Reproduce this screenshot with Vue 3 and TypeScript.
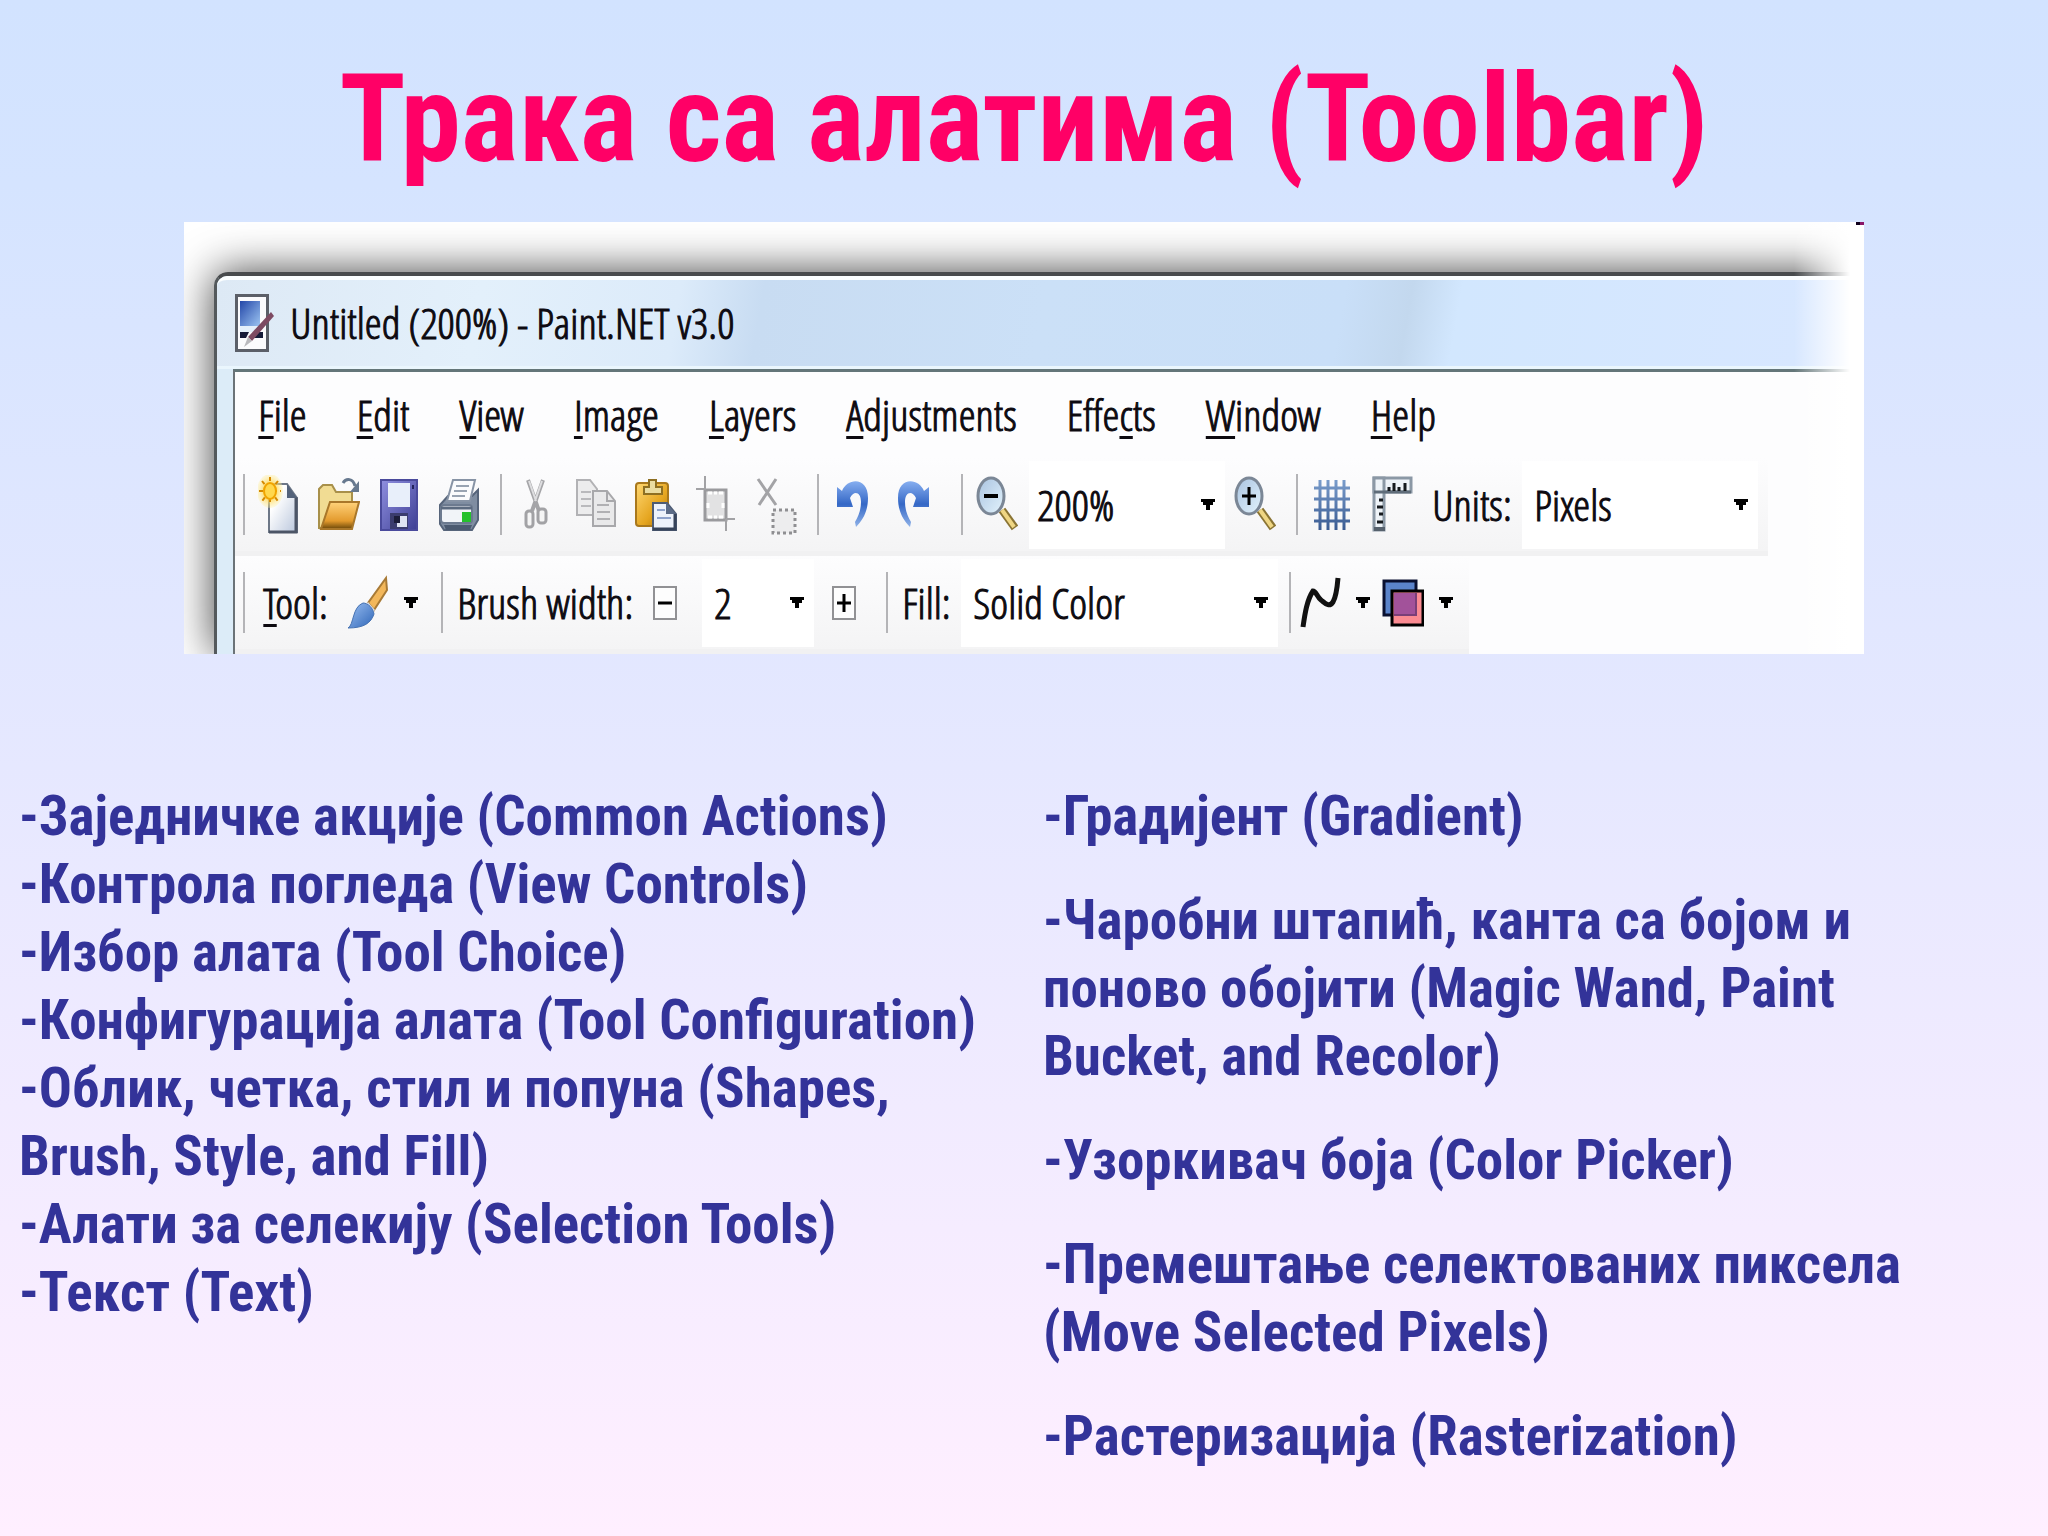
<script setup lang="ts">
import { ref } from 'vue'

interface MenuEntry {
  before: string
  key: string
  after: string
}

const menus: MenuEntry[] = [
  { before: '', key: 'F', after: 'ile' },
  { before: '', key: 'E', after: 'dit' },
  { before: '', key: 'V', after: 'iew' },
  { before: '', key: 'I', after: 'mage' },
  { before: '', key: 'L', after: 'ayers' },
  { before: '', key: 'A', after: 'djustments' },
  { before: 'Effe', key: 'c', after: 'ts' },
  { before: '', key: 'W', after: 'indow' },
  { before: '', key: 'H', after: 'elp' },
]

const commonTopics: string[] = [
  '-Заједничке акције (Common Actions)',
  '-Контрола погледа (View Controls)',
  '-Избор алата (Tool Choice)',
  '-Конфигурација алата (Tool Configuration)',
  '-Облик, четка, стил и попуна (Shapes, Brush, Style, and Fill)',
  '-Алати за селекију (Selection Tools)',
  '-Текст (Text)',
]

const toolTopics: string[] = [
  '-Градијент (Gradient)',
  '-Чаробни штапић, канта са бојом и поново обојити (Magic Wand, Paint Bucket, and Recolor)',
  '-Узоркивач боја (Color Picker)',
  '-Премештање селектованих пиксела (Move Selected Pixels)',
  '-Растеризација (Rasterization)',
]

const zoom = ref('200%')
const units = ref('Pixels')
const brushWidth = ref('2')
const fill = ref('Solid Color')
</script>

<template>
  <main class="slide">
    <h1>Трака са алатима (Toolbar)</h1>

    <section class="shot">
      <div class="window">
        <header class="titlebar">
          <svg class="app-icon" viewBox="0 0 40 58">
            <defs>
              <linearGradient id="screen" x1="0" y1="0" x2="1" y2="1">
                <stop offset="0" stop-color="#2347a8" />
                <stop offset="1" stop-color="#9cc4f2" />
              </linearGradient>
            </defs>
            <rect x="1.500" y="1.500" width="31" height="55" fill="#fbfbfd" stroke="#5b5f68" stroke-width="3" />
            <rect x="5" y="7" width="20" height="25" fill="url(#screen)" />
            <path d="M5 32h18l-5 6H5z" fill="#e4f0fb" />
            <path d="M5 38h9l-3 6H5zM19 38h9v6h-12z" fill="#151a38" />
            <path d="M36 18l3 4-22 25-4-4z" fill="#7d4a62" />
            <path d="M13 43l4 4-8 6z" fill="#b9b9bd" />
          </svg>
          <span>Untitled (200%) - Paint.NET v3.0</span>
        </header>

        <div class="client">
          <nav class="menubar">
            <button v-for="m in menus" :key="m.key + m.after" type="button">{{ m.before }}<u>{{ m.key }}</u>{{ m.after }}</button>
          </nav>

          <div class="toolbar main-tools">
            <div class="group">
              <button type="button" class="tool" aria-label="New">
                <svg viewBox="0 0 42 60">
                  <defs>
                    <linearGradient id="page" x1="0" y1="0" x2="1" y2="1">
                      <stop offset="0.3" stop-color="#ffffff" />
                      <stop offset="1" stop-color="#b9c6dc" />
                    </linearGradient>
                    <radialGradient id="glow">
                      <stop offset="0.3" stop-color="#ffcf3a" />
                      <stop offset="1" stop-color="#fff0a0" stop-opacity="0.3" />
                    </radialGradient>
                  </defs>
                  <path d="M11 9h18l10 14v34H11z" fill="url(#page)" stroke="#6d7787" stroke-width="2" />
                  <path d="M38 22v35H11" fill="none" stroke="#4c5566" stroke-width="3" />
                  <path d="M29 9v14h10z" fill="#53627a" />
                  <ellipse cx="12" cy="16" rx="13" ry="17" fill="url(#glow)" />
                  <path d="M12 2v28M1 16h22M4 6l16 20M20 6L4 26" stroke="#d58a00" stroke-width="2" stroke-dasharray="4 3" />
                  <ellipse cx="12" cy="16" rx="6" ry="8" fill="#ffd84d" stroke="#f0a400" stroke-width="2" />
                </svg>
              </button>
              <button type="button" class="tool" aria-label="Open">
                <svg viewBox="0 0 42 60">
                  <defs>
                    <linearGradient id="flap" x1="0" y1="0" x2="0" y2="1">
                      <stop offset="0" stop-color="#ffd27a" />
                      <stop offset="0.7" stop-color="#e39a2d" />
                      <stop offset="1" stop-color="#6b4708" />
                    </linearGradient>
                  </defs>
                  <path d="M1 14l4-4h9l4 7h16v36H1z" fill="#f1dc93" stroke="#a8904a" stroke-width="2" />
                  <path d="M12 27h29l-7 27H3z" fill="url(#flap)" stroke="#a9772a" stroke-width="2" />
                  <path d="M25 8c3-5 10-5 12 3" fill="none" stroke="#66788e" stroke-width="3" />
                  <path d="M41 6v11h-9z" fill="#66788e" />
                </svg>
              </button>
              <button type="button" class="tool" aria-label="Save">
                <svg viewBox="0 0 42 60">
                  <defs>
                    <linearGradient id="disk" x1="0" y1="0" x2="1" y2="1">
                      <stop offset="0" stop-color="#8f8fe0" />
                      <stop offset="1" stop-color="#3e3f94" />
                    </linearGradient>
                  </defs>
                  <rect x="3" y="5" width="36" height="50" fill="url(#disk)" stroke="#4a4a9c" stroke-width="2" />
                  <rect x="10" y="8" width="22" height="24" fill="#e8effa" />
                  <rect x="12" y="38" width="18" height="16" fill="#3b3c6e" />
                  <rect x="19" y="41" width="10" height="11" fill="#dfe3f2" />
                  <rect x="16" y="41" width="6" height="7" fill="#1c1d3a" />
                  <rect x="34" y="10" width="2" height="4" fill="#22235c" />
                </svg>
              </button>
              <button type="button" class="tool" aria-label="Print">
                <svg viewBox="0 0 42 60">
                  <path d="M2 30l8-9h24l6-6v30l-6 10H6l-4-6z" fill="#7f8da1" stroke="#56647a" stroke-width="2" />
                  <path d="M15 5h22l-5 21H9z" fill="#fafbfd" stroke="#8793a5" stroke-width="2" />
                  <path d="M18 11h13M16 16h13M14 21h13" stroke="#98a3b2" stroke-width="2" />
                  <rect x="3" y="30" width="31" height="18" rx="3" fill="#f1f4f8" stroke="#6c7a8f" stroke-width="2" />
                  <path d="M3 33h31" stroke="#5c6b80" stroke-width="3" />
                  <rect x="24" y="37" width="9" height="10" fill="#25c12c" />
                  <path d="M6 50h28l-2 5H8z" fill="#4b5a70" />
                </svg>
              </button>
            </div>

            <span class="sep"></span>
            <div class="group">
              <button type="button" class="tool" aria-label="Cut">
                <svg viewBox="0 0 42 60">
                  <path d="M13 5l11 31M28 5L17 36" fill="none" stroke="#a5a5a8" stroke-width="4" />
                  <path d="M14 6l7 20M27 6l-7 20" stroke="#dedee0" stroke-width="2" />
                  <rect x="11" y="36" width="7" height="16" rx="3" fill="#f5f5f5" stroke="#a2a2a5" stroke-width="3" />
                  <rect x="23" y="34" width="8" height="14" rx="3" fill="#f5f5f5" stroke="#a2a2a5" stroke-width="3" />
                </svg>
              </button>
              <button type="button" class="tool" aria-label="Copy">
                <svg viewBox="0 0 42 60">
                  <path d="M2 5h13l7 9v26H2z" fill="#ececed" stroke="#b2b2b5" stroke-width="2" />
                  <path d="M6 17h10M6 24h10M6 31h10" stroke="#b9b9bc" stroke-width="2" />
                  <path d="M18 16h14l8 10v25H18z" fill="#e9e9ea" stroke="#a8a8ab" stroke-width="2" />
                  <path d="M32 16v10h8" fill="none" stroke="#a8a8ab" stroke-width="2" />
                  <path d="M22 30h12M22 37h13M22 44h13" stroke="#b0b0b3" stroke-width="2" />
                </svg>
              </button>
              <button type="button" class="tool" aria-label="Paste">
                <svg viewBox="0 0 42 60">
                  <defs>
                    <linearGradient id="board" x1="0" y1="0" x2="1" y2="1">
                      <stop offset="0" stop-color="#ffd873" />
                      <stop offset="0.6" stop-color="#e5a51f" />
                      <stop offset="1" stop-color="#a36d06" />
                    </linearGradient>
                  </defs>
                  <rect x="1" y="8" width="32" height="43" rx="3" fill="url(#board)" stroke="#a9781c" stroke-width="2" />
                  <path d="M9 19v-7h5V5h7v7h6v7z" fill="#eadca0" stroke="#8e6f22" stroke-width="2" />
                  <path d="M18 28h14l9 11v16H18z" fill="#edf2fb" stroke="#4e5c74" stroke-width="2" />
                  <path d="M40 39v15H18" fill="none" stroke="#36435a" stroke-width="3" />
                  <path d="M31 28v11h10z" fill="#5b6b87" />
                  <path d="M22 35h8M22 43h14" stroke="#8fa3cc" stroke-width="2" />
                </svg>
              </button>
              <button type="button" class="tool" aria-label="Crop to selection">
                <svg viewBox="0 0 42 60">
                  <rect x="10" y="15" width="21" height="30" fill="#e2e2e3" stroke="#9a9a9d" stroke-width="3" />
                  <path d="M13 18h4M24 18h4M13 42h4M24 42h4M13 28v5M28 28v5M19 18h3M19 42h3" stroke="#fff" stroke-width="3" />
                  <path d="M1 14h10M10 1v14M31 44v12M31 44h9" stroke="#a2a2a5" stroke-width="2" />
                </svg>
              </button>
              <button type="button" class="tool" aria-label="Deselect">
                <svg viewBox="0 0 42 60">
                  <path d="M3 4l18 26M21 4L4 30" stroke="#a3a3a6" stroke-width="3" />
                  <rect x="18" y="35" width="22" height="23" fill="#ededee" stroke="#8f8f92" stroke-width="3" stroke-dasharray="3 3" />
                </svg>
              </button>
            </div>

            <span class="sep"></span>
            <div class="group history">
              <button type="button" class="tool" aria-label="Undo">
                <svg viewBox="0 0 42 60">
                  <defs>
                    <linearGradient id="arc" x1="0" y1="0" x2="0" y2="1">
                      <stop offset="0" stop-color="#86aef0" />
                      <stop offset="0.5" stop-color="#3568c6" />
                      <stop offset="1" stop-color="#8fb2e8" />
                    </linearGradient>
                  </defs>
                  <path d="M5 12l5 4C15 3 36 1 36 23c0 13-5 22-12 29l-1-5c4-7 6-13 6-20 0-10-7-12-11-4l3 9H5z" fill="url(#arc)" />
                </svg>
              </button>
              <button type="button" class="tool" aria-label="Redo">
                <svg viewBox="0 0 42 60">
                  <path d="M37 12l-5 4C27 3 6 1 6 23c0 13 5 22 12 29l1-5c-4-7-6-13-6-20 0-10 7-12 11-4l-3 9h16z" fill="url(#arc)" />
                </svg>
              </button>
            </div>

            <span class="sep"></span>
            <div class="group">
              <button type="button" class="tool" aria-label="Zoom out">
                <svg viewBox="0 0 42 60">
                  <defs>
                    <linearGradient id="lens" x1="0" y1="0" x2="1" y2="1">
                      <stop offset="0" stop-color="#a9c3e0" />
                      <stop offset="1" stop-color="#e3f3fc" />
                    </linearGradient>
                  </defs>
                  <path d="M26 35l13 18" stroke="#8a7434" stroke-width="8" />
                  <path d="M26 35l12 17" stroke="#efd683" stroke-width="4" />
                  <ellipse cx="15" cy="21" rx="13" ry="18" fill="url(#lens)" stroke="#7b8796" stroke-width="3" />
                  <path d="M8 21h14" stroke="#000" stroke-width="4" />
                </svg>
              </button>
              <label class="combo zoom">
                <select v-model="zoom" aria-label="Zoom">
                  <option>200%</option>
                </select>
                <svg class="caret" viewBox="0 0 14 12"><path d="M0 0h14v3h-2v3h-3v5H5V6H2V3H0z" /></svg>
              </label>
              <button type="button" class="tool" aria-label="Zoom in">
                <svg viewBox="0 0 42 60">
                  <path d="M26 35l13 18" stroke="#8a7434" stroke-width="8" />
                  <path d="M26 35l12 17" stroke="#efd683" stroke-width="4" />
                  <ellipse cx="15" cy="21" rx="13" ry="18" fill="url(#lens)" stroke="#7b8796" stroke-width="3" />
                  <path d="M8 21h14M15 12v18" stroke="#000" stroke-width="3" />
                </svg>
              </button>
            </div>

            <span class="sep"></span>
            <div class="group">
              <button type="button" class="tool" aria-label="Grid">
                <svg viewBox="0 0 42 60">
                  <defs>
                    <linearGradient id="mesh" gradientUnits="userSpaceOnUse" x1="0" y1="0" x2="0" y2="60">
                      <stop offset="0" stop-color="#7fa2d0" />
                      <stop offset="1" stop-color="#33548c" />
                    </linearGradient>
                  </defs>
                  <path d="M9 5v50M17 5v50M25 5v50M33 5v50M3 13h36M3 24h36M3 35h36M3 46h36" fill="none" stroke="url(#mesh)" stroke-width="3" />
                </svg>
              </button>
              <button type="button" class="tool" aria-label="Rulers">
                <svg viewBox="0 0 42 60">
                  <rect x="3" y="3" width="37" height="14" fill="#eef3f8" stroke="#8b98a5" stroke-width="3" />
                  <rect x="3" y="3" width="10" height="52" fill="#eef3f8" stroke="#8b98a5" stroke-width="3" />
                  <path d="M3 17h37" stroke="#5f6c79" stroke-width="3" />
                  <path d="M18 16v-4M23 16V8M28 16v-4M34 16V8M12 25H8M12 32H6M12 39H8M12 47H6" stroke="#15191d" stroke-width="3" />
                  <rect x="3" y="52" width="11" height="4" fill="#56616d" />
                </svg>
              </button>
            </div>
            <label class="caption" for="units">Units:</label>
            <span class="combo units">
              <select id="units" v-model="units">
                <option>Pixels</option>
              </select>
              <svg class="caret" viewBox="0 0 14 12"><path d="M0 0h14v3h-2v3h-3v5H5V6H2V3H0z" /></svg>
            </span>
          </div>

          <div class="toolbar tool-options">
            <span class="caption tool-name"><u>T</u>ool:</span>
            <button type="button" class="drop brush" aria-label="Choose tool">
              <svg class="glyph" viewBox="0 0 42 60">
                <defs>
                  <linearGradient id="bristle" x1="0" y1="0" x2="1" y2="1">
                    <stop offset="0" stop-color="#9cc0f2" />
                    <stop offset="1" stop-color="#2f66b8" />
                  </linearGradient>
                </defs>
                <path d="M39 5l1 12-13 20-6-7z" fill="#f2b75b" stroke="#a87a36" stroke-width="2" />
                <path d="M21 29l7 8-4 5-7-8z" fill="#d8dde6" />
                <path d="M16 30c5 0 10 5 11 11-3 9-10 14-26 14 6-3 4-21 15-25z" fill="url(#bristle)" stroke="#4672b2" stroke-width="1" />
              </svg>
              <svg class="caret" viewBox="0 0 14 12"><path d="M0 0h14v3h-2v3h-3v5H5V6H2V3H0z" /></svg>
            </button>

            <span class="sep"></span>
            <label class="caption brush-label" for="brush-width">Brush width:</label>
            <button type="button" class="step" aria-label="Decrease">
              <svg viewBox="0 0 24 34">
                <rect x="1" y="1" width="22" height="32" fill="#fdfdfd" stroke="#919194" stroke-width="2" />
                <path d="M5 17h14" stroke="#000" stroke-width="3" />
              </svg>
            </button>
            <span class="combo width">
              <select id="brush-width" v-model="brushWidth">
                <option>2</option>
              </select>
              <svg class="caret" viewBox="0 0 14 12"><path d="M0 0h14v3h-2v3h-3v5H5V6H2V3H0z" /></svg>
            </span>
            <button type="button" class="step" aria-label="Increase">
              <svg viewBox="0 0 24 34">
                <rect x="1" y="1" width="22" height="32" fill="#fdfdfd" stroke="#919194" stroke-width="2" />
                <path d="M5 17h14M12 8v18" stroke="#000" stroke-width="3" />
              </svg>
            </button>

            <span class="sep after-step"></span>
            <label class="caption fill-label" for="fill">Fill:</label>
            <span class="combo fill">
              <select id="fill" v-model="fill">
                <option>Solid Color</option>
              </select>
              <svg class="caret" viewBox="0 0 14 12"><path d="M0 0h14v3h-2v3h-3v5H5V6H2V3H0z" /></svg>
            </span>

            <span class="sep"></span>
            <button type="button" class="drop" aria-label="Antialiasing">
              <svg class="glyph" viewBox="0 0 42 60">
                <path d="M4 54C6 40 8 27 14 18c3 0 4 6 8 9s8 8 12 2c3-5 4-12 5-24" fill="none" stroke="#111" stroke-width="5" />
              </svg>
              <svg class="caret" viewBox="0 0 14 12"><path d="M0 0h14v3h-2v3h-3v5H5V6H2V3H0z" /></svg>
            </button>
            <button type="button" class="drop blend" aria-label="Blending">
              <svg class="glyph" viewBox="0 0 42 60">
                <rect x="2" y="8" width="32" height="34" fill="#5b84cb" stroke="#0a1030" stroke-width="3" />
                <rect x="10" y="18" width="31" height="34" fill="#fb8b92" stroke="#000" stroke-width="3" />
                <path d="M12 20h22v22H12z" fill="#a2529a" />
                <path d="M12 42h22V20" fill="none" stroke="#7a3f78" stroke-width="2" />
              </svg>
              <svg class="caret" viewBox="0 0 14 12"><path d="M0 0h14v3h-2v3h-3v5H5V6H2V3H0z" /></svg>
            </button>
          </div>
        </div>
      </div>
      <span class="corner-mark"></span>
    </section>

    <div class="topics">
      <ul class="common">
        <li v-for="t in commonTopics" :key="t">{{ t }}</li>
      </ul>
      <ul class="tools">
        <li v-for="t in toolTopics" :key="t">{{ t }}</li>
      </ul>
    </div>
  </main>
</template>

<style>
body {
  margin: 0;
}
</style>

<style scoped>
* {
  box-sizing: border-box;
}

.slide {
  min-height: 100vh;
  padding-top: 45px;
  background: linear-gradient(#d2e3ff 0%, #d5e4ff 12%, #e6e8ff 50%, #f5ecff 80%, #ffefff 100%);
  font-family: 'Roboto Condensed', 'Liberation Sans Narrow', 'Arial Narrow', sans-serif;
  color: #333399;
}

h1 {
  margin: 0;
  font-size: 122px;
  line-height: 150px;
  font-weight: 700;
  text-align: center;
  color: #ff0066;
}

/* Cropped application window on white */
.shot {
  position: relative;
  width: 82%;
  margin: 27px auto 0;
  padding: 50px 0 0 30px;
  overflow: hidden;
  background: #fff;
  color: #0d0a10;
  font-family: 'Open Sans Condensed Light', 'Open Sans Condensed', 'Roboto Condensed', sans-serif;
  font-size: 43px;
  font-weight: 300;
  line-height: 52px;
  -webkit-text-stroke: 1px currentColor;
}

.shot::after {
  content: '';
  position: absolute;
  inset: 0 0 0 auto;
  width: 70px;
  background: linear-gradient(90deg, rgba(255, 255, 255, 0), #fff 80%);
}

.corner-mark {
  position: absolute;
  z-index: 1;
  top: 0;
  right: 0;
  width: 8px;
  height: 3px;
  background: linear-gradient(90deg, #10001c 50%, #8a1668 50%);
}

.window {
  border-top: 4px solid #484b4d;
  border-left: 3px solid #54595c;
  border-top-left-radius: 14px;
  background: linear-gradient(90deg, #dcecf8, #d9edf9);
  box-shadow: 0 0 44px rgba(0, 0, 0, 0.75);
}

.titlebar {
  display: flex;
  align-items: center;
  gap: 15px;
  height: 93px;
  padding: 0 0 0 18px;
  border-top: 4px solid #fbfeff;
  border-bottom: 3px solid #eaf6fd;
  border-top-left-radius: 10px;
  background: linear-gradient(100deg, #dde9f5 0, #e3f0fb 16%, #dcebfa 28%, #c8dcf2 33%, #cbe0f7 50%, #c9dff8 68%, #c3d8ee 72%, #d2e7fe 75%, #d8e7ff 100%);
  white-space: nowrap;
}

.app-icon {
  width: 40px;
  height: 58px;
}

.client {
  margin-left: 16px;
  border-top: 3px solid #647679;
  border-left: 2px solid #6b7378;
  background: #fdfdfe;
}

button,
select {
  margin: 0;
  padding: 0;
  border: 0;
  background: none;
  color: inherit;
  font: inherit;
}

u {
  text-decoration-thickness: 3px;
  text-underline-offset: 5px;
}

.menubar {
  display: flex;
  align-items: center;
  gap: 50px;
  height: 86px;
  padding-left: 23px;
}

.toolbar {
  display: flex;
  align-items: center;
  width: max-content;
  height: 98px;
  padding-left: 8px;
  border-bottom: 5px solid #f1f1f2;
  background: linear-gradient(#fdfdfe, #f4f4f5);
}

.toolbar::before,
.sep {
  content: '';
  flex: none;
  width: 2px;
  height: 61px;
  margin-right: 4px;
  background: #b4b4b7;
}

.sep {
  margin-left: 11px;
}

.main-tools {
  padding-right: 10px;
}

.group {
  display: flex;
  align-items: center;
}

.history {
  margin-right: 7px;
}

.tool {
  display: flex;
  justify-content: center;
  width: 60px;
}

.tool svg,
.glyph {
  width: 42px;
  height: 60px;
}

.combo {
  display: grid;
  align-items: center;
  height: 88px;
  background: #fff;
}

.combo > * {
  grid-area: 1 / 1;
}

.combo select {
  appearance: none;
  width: 100%;
  height: 100%;
  padding-left: 12px;
}

.combo .caret {
  justify-self: end;
  margin-right: 10px;
}

.caret {
  width: 14px;
  height: 12px;
  fill: #000;
}

.zoom {
  width: 196px;
  margin-left: 2px;
}

.zoom select {
  padding-left: 8px;
}

.units {
  width: 236px;
}

.caption {
  white-space: nowrap;
}

.main-tools .caption {
  width: 100px;
  padding-left: 10px;
}

.tool-options {
  padding-right: 16px;
}

.tool-name {
  width: 94px;
  padding-left: 14px;
}

.drop {
  display: flex;
  align-items: center;
  gap: 15px;
  padding-left: 4px;
}

.brush {
  margin-right: 12px;
}

.blend {
  padding-left: 12px;
}

.brush-label {
  width: 206px;
  padding-left: 10px;
}

.step,
.step svg {
  display: block;
  width: 24px;
  height: 34px;
}

.width {
  width: 112px;
  margin: 0 18px 0 25px;
}

.after-step {
  margin-left: 30px;
}

.fill-label {
  width: 69px;
  padding-left: 10px;
}

.fill {
  width: 317px;
}

/* Bulleted topics */
.topics {
  display: grid;
  grid-template-columns: 1fr 1fr;
  padding: 128px 0 40px;
  font-size: 55px;
  line-height: 68px;
  font-weight: 700;
}

ul {
  margin: 0;
  padding: 0 16px 0 19px;
  list-style: none;
}

.tools {
  display: flex;
  flex-direction: column;
  gap: 36px;
  padding-right: 38px;
}
</style>
